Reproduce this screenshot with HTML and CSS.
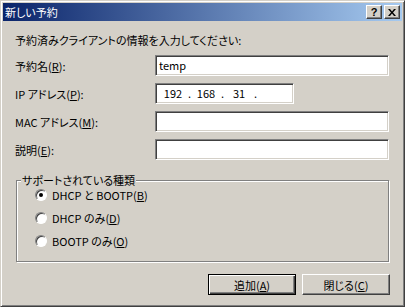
FILE: index.html
```html
<!DOCTYPE html>
<html lang="ja">
<head>
    <meta charset="UTF-8">
    <title>新しい予約</title>
    <link rel="stylesheet" href="styles.css">
</head>
<body>
    <div class="window">
        <div class="titlebar">
            <span class="title">新しい予約</span>
            <div class="caption-buttons">
                <span class="cap-btn help">?</span>
                <span class="cap-btn close">
                    <svg width="8" height="7" viewBox="0 0 8 7">
                        <path d="M0 0h2l2 2.5 2-2.5h2L5 3.5 8 7H6L4 4.5 2 7H0l3-3.5z" fill="#000"/>
                    </svg>
                </span>
            </div>
        </div>

        <div class="content">
            <p class="intro">予約済みクライアントの情報を入力してください:</p>

            <!-- 入力欄 -->
            <div class="form">
                <label>予約名(<u>R</u>):</label>
                <div class="field">temp</div>

                <label>IP アドレス(<u>P</u>):</label>
                <div class="field ip">
                    <span class="seg">192</span><span class="dot">.</span>
                    <span class="seg">168</span><span class="dot">.</span>
                    <span class="seg">31</span><span class="dot">.</span>
                    <span class="seg"></span>
                </div>

                <label>MAC アドレス(<u>M</u>):</label>
                <div class="field"></div>

                <label>説明(<u>E</u>):</label>
                <div class="field"></div>
            </div>

            <!-- サポートされている種類 -->
            <fieldset class="group">
                <legend>サポートされている種類</legend>
                <div class="options">
                    <div class="option"><span class="radio checked"></span>DHCP と BOOTP(<u>B</u>)</div>
                    <div class="option"><span class="radio"></span>DHCP のみ(<u>D</u>)</div>
                    <div class="option"><span class="radio"></span>BOOTP のみ(<u>O</u>)</div>
                </div>
            </fieldset>

            <div class="buttons">
                <button class="btn default">追加(<u>A</u>)</button>
                <button class="btn">閉じる(<u>C</u>)</button>
            </div>
        </div>
    </div>
</body>
</html>
```
FILE: styles.css
```css
body {
    margin: 0;
    padding: 0;
    font-family: "Noto Sans CJK JP", "Liberation Sans", sans-serif;
    font-size: 11px;
    font-feature-settings: "palt";
    color: #000;
}
.window {
    width: 405px;
    height: 307px;
    box-sizing: border-box;
    background-color: #d4d0c8;
    border: 1px solid;
    border-color: #d4d0c8 #404040 #404040 #d4d0c8;
    box-shadow: inset 1px 1px #fff, inset -1px -1px #808080;
    padding: 2px;
    display: flex;
    flex-direction: column;
}
.titlebar {
    height: 18px;
    display: flex;
    align-items: center;
    justify-content: space-between;
    background: linear-gradient(to right, #0a246a, #a6caf0);
    color: white;
    padding: 0 2px 0 2px;
}
.title {
    line-height: 18px;
    font-size: 11px;
}
.caption-buttons {
    display: flex;
    gap: 2px;
}
.cap-btn {
    width: 16px;
    height: 14px;
    box-sizing: border-box;
    background-color: #d4d0c8;
    border: 1px solid;
    border-color: #fff #404040 #404040 #fff;
    box-shadow: inset -1px -1px #808080;
    display: flex;
    align-items: center;
    justify-content: center;
    color: #000;
}
.help {
    font-family: "Liberation Sans", sans-serif;
    font-weight: bold;
    font-size: 11px;
    line-height: 12px;
}
.content {
    padding: 11px 12px 0 12px;
}
.intro {
    margin: 0;
    line-height: 16px;
}
.form {
    display: grid;
    grid-template-columns: 140px 234px;
    grid-auto-rows: 21px;
    row-gap: 7px;
    align-items: center;
    margin-top: 7px;
}
.field {
    height: 21px;
    box-sizing: border-box;
    background: white;
    border: 1px solid;
    border-color: #808080 #fff #fff #808080;
    box-shadow: inset 1px 1px #404040, inset -1px -1px #d4d0c8;
    padding: 0 3px;
    line-height: 19px;
}
.field.ip {
    width: 139px;
    display: flex;
    padding-left: 5px;
}
.seg {
    width: 24px;
    text-align: center;
}
.dot {
    width: 9px;
    text-align: center;
}
.group {
    margin: 14px 1px 0 1px;
    padding: 0 0 9px 18px;
    width: 373px;
    box-sizing: border-box;
    border: 1px solid #808080;
    box-shadow: 1px 1px #fff, inset 1px 1px #fff;
}
.group legend {
    padding: 0 1px;
    margin-left: -14px;
    line-height: 12px;
    background-color: #d4d0c8;
}
.options {
    margin-top: -3px;
}
.option {
    height: 23px;
    line-height: 14px;
    display: flex;
    align-items: center;
}
.radio {
    width: 12px;
    height: 12px;
    box-sizing: border-box;
    border-radius: 50%;
    border: 1px solid;
    border-color: #808080 #fff #fff #808080;
    box-shadow: inset 1px 1px #404040;
    background: white;
    margin-right: 5px;
    display: flex;
    align-items: center;
    justify-content: center;
}
.radio.checked::after {
    content: "";
    width: 4px;
    height: 4px;
    border-radius: 50%;
    background: #000;
}
.buttons {
    display: flex;
    justify-content: flex-end;
    gap: 6px;
    margin-top: 12px;
}
.btn {
    width: 88px;
    height: 21px;
    box-sizing: border-box;
    font-family: inherit;
    font-size: 11px;
    font-feature-settings: "palt";
    background-color: #d4d0c8;
    border: 1px solid;
    border-color: #fff #404040 #404040 #fff;
    box-shadow: inset -1px -1px #808080;
    padding: 0;
    color: #000;
}
.btn.default {
    border: 1px solid #000;
    box-shadow: inset 1px 1px #fff, inset -1px -1px #404040, inset -2px -2px #808080;
}
```
